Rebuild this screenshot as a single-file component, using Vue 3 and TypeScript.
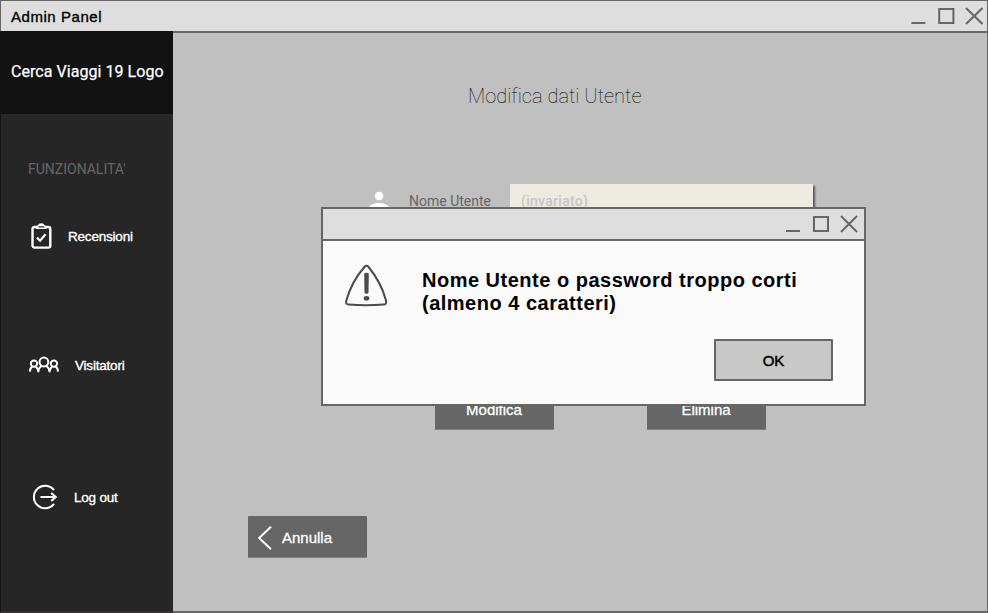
<script setup lang="ts">
import { ref } from 'vue'

interface NavItem {
  id: string
  label: string
}

const navItems: NavItem[] = [
  { id: 'reviews', label: 'Recensioni' },
  { id: 'visitors', label: 'Visitatori' },
  { id: 'logout', label: 'Log out' },
]

const dialogOpen = ref(true)
const username = ref('')
</script>

<template>
  <div class="window">
    <header class="titlebar">
      <span class="window-title">Admin Panel</span>
      <svg class="controls" width="74" height="20" viewBox="0 0 74 20">
        <path d="M0.4 16h14" />
        <path d="M28.2 2h14.2v14h-14.2z" />
        <path d="M55 1l16.5 16M71.5 1l-16.5 16" />
      </svg>
    </header>

    <div class="body">
      <nav class="sidebar">
        <div class="logo"><span>Cerca Viaggi 19 Logo</span></div>
        <div class="menu">
          <h2 class="section">FUNZIONALITA'</h2>
          <a v-for="item in navItems" :key="item.id" class="nav-item" :class="item.id">
            <svg v-if="item.id === 'reviews'" class="icon" width="22" height="28" viewBox="0 0 22 28">
              <rect x="2.5" y="5" width="17.8" height="20.6" rx="2" stroke-width="2.4" />
              <path d="M6 7V4.9q0-1.5 1.8-1.5Q8.6 1.2 11.3 1.2t3.4 2.2q1.9 0 1.9 1.5V7z" fill="#fff" stroke="none" />
              <path d="M8.3 5.6q0-1.4 1.2-1.4h3.8q1.2 0 1.2 1.4z" fill="#262626" stroke="none" />
              <path d="M6.9 15.6l3.2 3.1 5.4-6.4" stroke-width="2.2" />
            </svg>
            <svg v-else-if="item.id === 'visitors'" class="icon" width="32" height="18" viewBox="0 0 32 18">
              <g stroke-width="2">
                <circle cx="15.9" cy="6" r="4.4" />
                <circle cx="6" cy="7.6" r="3.2" />
                <circle cx="25.9" cy="7.6" r="3.2" />
                <path d="M10.2 16.3q.1-4.3 3.3-6.3M21.6 16.3q-.1-4.3-3.3-6.3" />
                <path d="M1.9 15.6q.1-3.6 2.4-5M7.6 10.7q1.8.9 2.6 4M30 15.6q-.1-3.6-2.4-5M24.3 10.7q-1.8.9-2.6 4" />
              </g>
            </svg>
            <svg v-else class="icon" width="26" height="26" viewBox="0 0 26 26">
              <path d="M22 6.2A11.2 11.2 0 1 0 22 19.8" stroke-width="2" />
              <path d="M8.5 13h15.5M19.2 8.9l4.6 4.1-4.6 4.1" stroke-width="2" />
            </svg>
            <span>{{ item.label }}</span>
          </a>
        </div>
      </nav>

      <main class="content">
        <h1 class="heading">Modifica dati Utente</h1>
        <div class="field">
          <svg class="user" width="22" height="22" viewBox="0 0 22 22">
            <circle cx="11" cy="6" r="4.3" />
            <path d="M1 20v-2.8C2 14.7 6 13 11 13s9 1.7 10 4.2V20z" />
          </svg>
          <label for="username">Nome Utente</label>
          <input id="username" v-model="username" placeholder="(invariato)" />
        </div>
        <div class="actions">
          <button class="button">Modifica</button>
          <button class="button">Elimina</button>
        </div>
        <button class="button back">
          <svg width="16" height="26" viewBox="0 0 16 26">
            <path d="M13 1.8L1.2 13 13 24.2" />
          </svg>
          <span>Annulla</span>
        </button>
      </main>
    </div>

    <section v-if="dialogOpen" class="dialog" role="alertdialog">
      <header class="dialog-bar">
        <svg class="controls" width="74" height="20" viewBox="0 0 74 20">
          <path d="M0 16h14" />
          <path d="M28 2h14v14h-14z" />
          <path d="M55 1l16 16M71 1l-16 16" />
        </svg>
      </header>
      <div class="dialog-body">
        <div class="message">
          <svg class="warning" width="44" height="44" viewBox="0 0 44 44">
            <path d="M20.4 3Q22.5.7 24.6 3C31.5 11.5 38.8 24.5 42 36.5q1 3.8-2.5 4.1c-11 .9-24 .9-35 0Q1.5 40.3 2.3 36.7C5.5 25.2 12.8 11.6 20.4 3z" />
            <path class="mark" d="M20.2 10q0-1.2 2.3-1.2t2.3 1.2l-.3 18.2q-.1 1.5-2 1.5t-2-1.5z" />
            <ellipse class="mark" cx="22.5" cy="34.2" rx="2.8" ry="2.3" />
          </svg>
          <p>Nome Utente o password troppo corti<br />(almeno 4 caratteri)</p>
        </div>
        <button class="ok" @click="dialogOpen = false">OK</button>
      </div>
    </section>
  </div>
</template>

<style>
body {
  margin: 0;
  overflow: hidden;
}
</style>

<style scoped>
* {
  box-sizing: border-box;
}

.window {
  position: relative;
  display: flex;
  flex-direction: column;
  width: 988px;
  height: 613px;
  background: #c0c0c0;
  font-family: "Liberation Sans", Arial, sans-serif;
}

.titlebar {
  display: flex;
  flex: none;
  align-items: flex-start;
  justify-content: space-between;
  height: 31px;
  padding: 6px 2px 0 10px;
  background: #dedede;
  border: 1px solid #666;
  border-bottom: 0;
}

.window-title {
  padding-top: 1px;
  font-size: 15px;
  line-height: 18px;
  letter-spacing: 0.55px;
  color: #000;
  -webkit-text-stroke: 0.35px #000;
}

.controls {
  flex: none;
  fill: none;
  stroke: #666;
  stroke-width: 2;
}

.body {
  display: flex;
  flex: 1;
  min-height: 0;
}

.sidebar {
  display: flex;
  flex: none;
  flex-direction: column;
  width: 173px;
  background: #262626;
  border-left: 1px solid #151515;
  border-bottom: 2px solid #343232;
}

.logo {
  display: flex;
  flex: none;
  align-items: center;
  height: 83px;
  margin-left: -1px;
  padding: 0 0 2px 11px;
  background: #121212;
  color: #fff;
  font: 400 16px/20px Roboto, sans-serif;
  letter-spacing: 0.05px;
  white-space: nowrap;
  -webkit-text-stroke: 0.25px #fff;
}

.menu {
  display: flex;
  flex-direction: column;
  padding: 45px 0 0 27px;
}

.section {
  margin: 0;
  color: #666;
  font: 400 14px/20px Roboto, sans-serif;
}

.nav-item {
  display: flex;
  align-items: center;
  height: 28px;
  color: #fff;
  font-size: 13.5px;
  letter-spacing: -0.2px;
  white-space: nowrap;
  -webkit-text-stroke: 0.35px #fff;
}

.reviews {
  margin-top: 43px;
  padding-left: 2px;
  gap: 16px;
}

.visitors {
  margin-top: 101px;
  gap: 15px;
}

.logout {
  margin-top: 104px;
  padding-left: 4px;
  gap: 16px;
}

.icon {
  flex: none;
  fill: none;
  stroke: #fff;
}

.content {
  display: flex;
  flex: 1;
  flex-direction: column;
  align-items: flex-start;
  border: 2px solid #666;
  border-left: 0;
  border-right-width: 1px;
}

.heading {
  margin: 51px 0 0 295px;
  color: #000;
  font: 100 20px/24px Roboto, sans-serif;
  letter-spacing: 0.03px;
}

.field {
  display: flex;
  align-items: center;
  height: 36px;
  margin: 75px 0 0 195px;
}

.user {
  fill: #fff;
}

label {
  width: 101px;
  margin-left: 19px;
  color: #666;
  font: 400 14px/20px Roboto, sans-serif;
}

input {
  width: 303px;
  height: 35px;
  padding: 0 0 0 11px;
  border: 0;
  outline: 0;
  background: #edeae2;
  box-shadow: 2px 2px 2px #555;
  font: 500 14px/20px Roboto, sans-serif;
  letter-spacing: 0.3px;
}

input::placeholder {
  color: #c5c5c5;
  opacity: 1;
}

.actions {
  display: flex;
  gap: 93px;
  margin: 169px 0 0 262px;
}

.button {
  width: 119px;
  height: 42px;
  padding: 2px 1px 0 0;
  border: 0;
  border-bottom: 1px solid #808080;
  border-radius: 1px;
  background: #666;
  color: #fff;
  font: 15px/20px "Liberation Sans", Arial, sans-serif;
  -webkit-text-stroke: 0.3px #fff;
}

.back {
  display: flex;
  align-items: center;
  gap: 8px;
  margin: 86px 0 0 75px;
  padding: 2px 0 0 10px;
}

.back svg {
  fill: none;
  stroke: #fff;
  stroke-width: 2;
}

.dialog {
  position: absolute;
  top: 207px;
  left: 321px;
  width: 545px;
  height: 199px;
  border: 2px solid #666;
  background: #fafafa;
}

.dialog-bar {
  display: flex;
  justify-content: flex-end;
  height: 32px;
  padding: 6px 4px 0 0;
  border-bottom: 2px solid #666;
  background: #dedede;
}

.dialog-body {
  display: flex;
  flex-direction: column;
  padding: 23px 31px 0 21px;
}

.message {
  display: flex;
  align-items: flex-start;
  height: 50px;
}

.warning {
  fill: none;
  stroke: #4a4a4a;
  stroke-width: 2;
}

.mark {
  fill: #4a4a4a;
  stroke: none;
}

.message p {
  margin: 5px 0 0 34px;
  color: #000;
  font-size: 20px;
  font-weight: 700;
  line-height: 23px;
  letter-spacing: 0.5px;
  white-space: nowrap;
}

.ok {
  align-self: flex-end;
  width: 119px;
  height: 42px;
  margin-top: 25px;
  padding: 1px 0 0;
  border: 2px solid #666;
  border-radius: 1px;
  background: #c8c8c8;
  color: #000;
  font: 15px/20px "Liberation Sans", Arial, sans-serif;
  -webkit-text-stroke: 0.5px #000;
}
</style>
